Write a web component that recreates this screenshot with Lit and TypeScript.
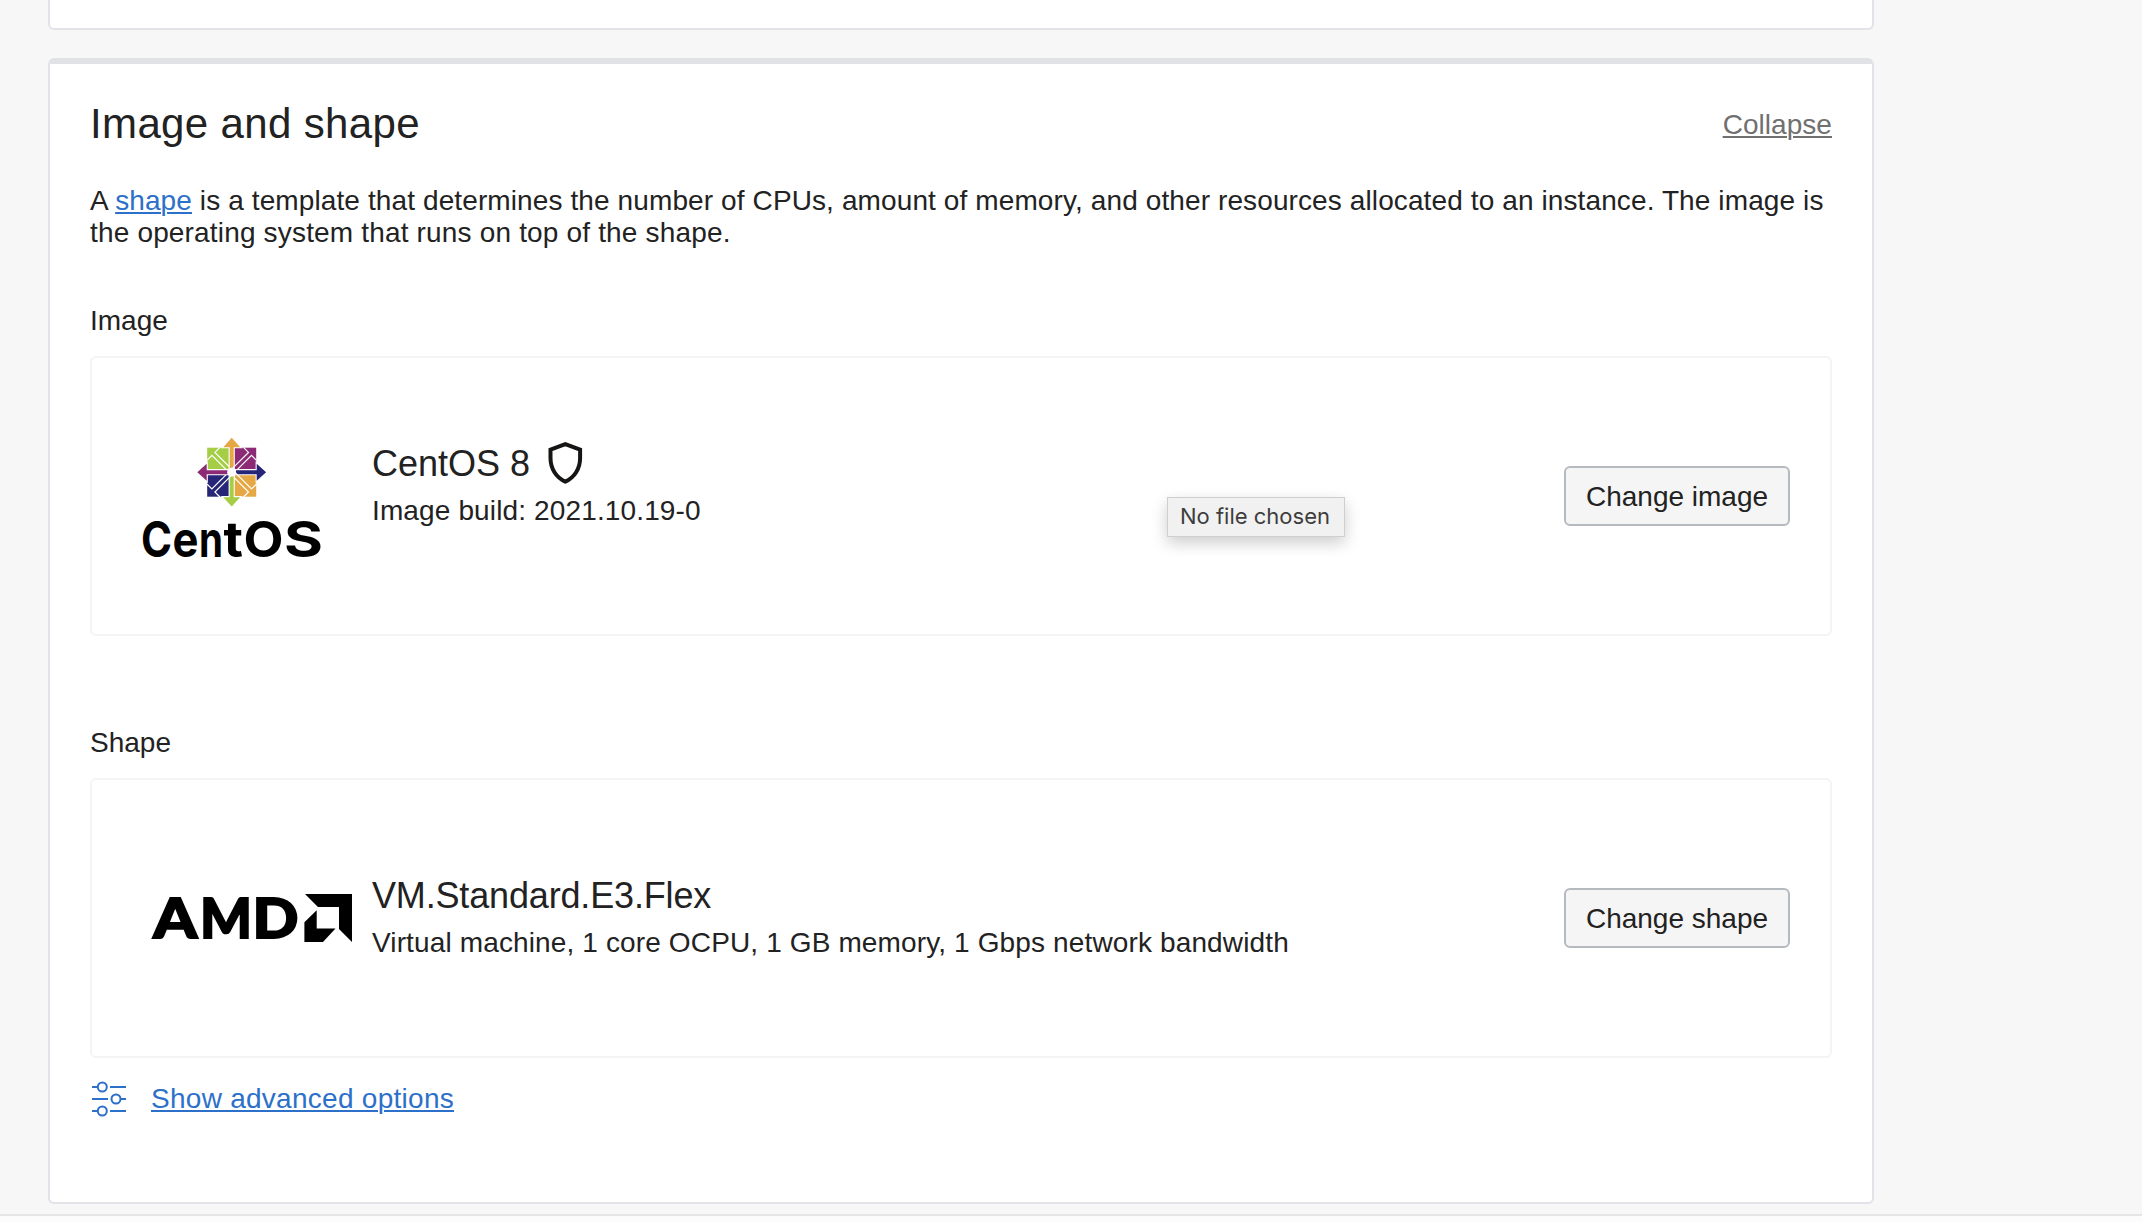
import { LitElement, html, css, svg } from "lit";
import { customElement } from "lit/decorators.js";

const spokes = [0, 90, 180, 270];

const centosLogo = html`<svg class="logo" width="196" height="164" viewBox="134 414 196 164">
  <g transform="translate(231.7 472.2)">
    <rect x="-24.5" y="-24.5" width="23" height="23" fill="#a5cd46"></rect>
    <rect x="1.5" y="-24.5" width="23" height="23" fill="#8c2a76"></rect>
    <rect x="-24.5" y="1.5" width="23" height="23" fill="#262577"></rect>
    <rect x="1.5" y="1.5" width="23" height="23" fill="#e5a844"></rect>
    ${["#e5a844", "#262577", "#a5cd46", "#8c2a76"].map(
      (c, i) => svg`<g transform="rotate(${spokes[i]})">
        <path d="M-24.8 -11.8L-19.8 -16.8L-4 -1M-11.8 -24.8L-16.8 -19.8L-1 -4" fill="none" stroke="#fff" stroke-width="1.2"></path>
        <path d="M-2 -4L-2 -25L-8.500 -25L0 -34.4L8.500 -25L2 -25L2 -4Z" fill="${c}" stroke="#fff" stroke-width="2.200" paint-order="stroke"></path>
      </g>`
    )}
    <circle r="4.400" fill="#fff"></circle>
  </g>
  <text class="centos" y="556.500"><tspan x="141" textLength="31" lengthAdjust="spacingAndGlyphs">C</tspan><tspan x="172.500" textLength="26" lengthAdjust="spacingAndGlyphs">e</tspan><tspan x="199" textLength="24" lengthAdjust="spacingAndGlyphs">n</tspan><tspan x="223.500" textLength="19.500" lengthAdjust="spacingAndGlyphs">t</tspan><tspan x="243.500" textLength="40" lengthAdjust="spacingAndGlyphs">O</tspan><tspan x="284" textLength="39" lengthAdjust="spacingAndGlyphs">S</tspan></text>
</svg>`;

const amdLogo = html`<svg class="logo" width="210" height="100" viewBox="147 868 210 100">
  <text class="amd" y="937.5"><tspan x="153.200" textLength="44" lengthAdjust="spacingAndGlyphs">A</tspan><tspan x="200" textLength="52" lengthAdjust="spacingAndGlyphs">M</tspan><tspan x="252.500" textLength="46" lengthAdjust="spacingAndGlyphs">D</tspan></text>
  <path d="M305 894H352V942L339 929V907H318Z"></path>
  <path d="M316.700 910.300V928.500H335.500L323 942H304.400V922.300Z"></path>
</svg>`;

const shield = html`<svg class="shield" width="36" height="44" viewBox="547 441 36 44">
  <path d="M565.3 444.200L580.100 449.700V458C580.100 468.500 574.500 477.500 565.300 481.600C556.100 477.500 550.500 468.500 550.500 458V449.700Z" fill="none" stroke="#161513" stroke-width="4"></path>
</svg>`;

const sliders = html`<svg class="sliders" width="36" height="36" viewBox="91 1081 36 36">
  <g fill="none" stroke="#2d70c9" stroke-width="2">
    <path d="M92 1087H97.500M110 1087H126M92 1099H108M121 1099H126M92 1111H97.500M110 1111H126"></path>
    <circle cx="102.300" cy="1087" r="4.500"></circle>
    <circle cx="116" cy="1099" r="4.500"></circle>
    <circle cx="102.300" cy="1111" r="4.500"></circle>
  </g>
</svg>`;

@customElement("app-root")
export class AppRoot extends LitElement {
  static styles = css`
    :host {
      display: block;
      position: relative;
      height: 1222px;
      overflow: hidden;
      background: #f7f7f7;
      color: #222;
      font: 28px/32px "Liberation Sans", Arial, sans-serif;
    }
    * { box-sizing: border-box; }
    .page { display: flex; flex-direction: column; height: 1222px; }
    .previous {
      width: 1826px; height: 30px; margin-left: 48px; flex: none;
      background: #fff; border: 2px solid #e2e3e9; border-top: 0;
      border-radius: 0 0 6px 6px;
    }
    .panel {
      width: 1826px; height: 1146px; margin: 28px 0 0 48px; flex: none;
      padding: 35px 40px 0; background: #fff;
      border: 2px solid #e2e3e9; border-top: 6px solid #e1e2e6; border-radius: 6px;
    }
    .footer { margin-top: 10px; flex: 1; border-top: 2px solid #e5e5e5; background: #fcfcfc; }
    .head { display: flex; justify-content: space-between; height: 50px; }
    h2 { margin: 0; font-size: 42px; line-height: 50px; font-weight: 400; letter-spacing: .36px; }
    a { text-decoration: underline; text-decoration-thickness: 2px; text-underline-offset: 2px; color: #2d70c9; }
    .collapse { color: #707070; padding-top: 10px; letter-spacing: .05px; }
    p { margin: 36px 0 0; white-space: nowrap; }
    .line1 { letter-spacing: .11px; }
    .line2 { letter-spacing: .17px; }
    .label { margin-top: 56px; height: 32px; }
    .label.second { margin-top: 91px; }
    .card {
      display: grid; grid-template-columns: 280px 1fr auto; align-items: center;
      height: 280px; margin-top: 19px; padding-right: 40px;
      border: 2px solid #f4f4f4; border-radius: 6px;
    }
    .logo { display: block; margin-left: 42px; }
    .card.shape .logo { margin-left: 55px; }
    .centos { font: 700 49px Inter, sans-serif; fill: #000; }
    .amd { font: 900 55px Lato, sans-serif; fill: #000; stroke: #000; stroke-width: 1.800px; }
    .info { align-self: start; padding-top: 84px; }
    .card.shape .info { padding-top: 94px; }
    .title { display: flex; height: 53px; font-size: 36px; line-height: 44px; }
    .card.shape .title { letter-spacing: -.16px; }
    .detail { letter-spacing: .135px; }
    .shield { margin-left: 17px; margin-top: -1px; }
    button {
      width: 226px; height: 60px; padding: 2px 0 0; font: inherit; color: inherit;
      background: #f5f5f5; border: 2px solid #b5bac1; border-radius: 6px; white-space: nowrap;
    }
    .advanced { display: flex; margin-top: 25px; }
    .sliders { margin-left: 1px; margin-top: -2px; }
    .advanced a { margin-left: 24px; letter-spacing: .27px; }
    .tooltip {
      position: absolute; left: 1167px; top: 497px; width: 178px; height: 40px;
      border: 1px solid #cfcfcf; background: #f1f1f1; color: #3d3d3d;
      font: 22px/37px Inter, sans-serif; padding-left: 12px; white-space: nowrap;
      box-shadow: 0 6px 16px rgba(0, 0, 0, .2);
    }
  `;

  render() {
    return html`
      <div class="page">
        <div class="previous"></div>
        <section class="panel">
          <div class="head"><h2>Image and shape</h2><a class="collapse">Collapse</a></div>
          <p><span class="line1">A <a>shape</a> is a template that determines the number of CPUs, amount of memory, and other resources allocated to an instance. The image is</span><br><span class="line2">the operating system that runs on top of the shape.</span></p>
          <div class="label">Image</div>
          <div class="card">
            ${centosLogo}
            <div class="info">
              <div class="title"><span>CentOS 8</span>${shield}</div>
              <div class="detail">Image build: 2021.10.19-0</div>
            </div>
            <button>Change image</button>
          </div>
          <div class="label second">Shape</div>
          <div class="card shape">
            ${amdLogo}
            <div class="info">
              <div class="title"><span>VM.Standard.E3.Flex</span></div>
              <div class="detail">Virtual machine, 1 core OCPU, 1 GB memory, 1 Gbps network bandwidth</div>
            </div>
            <button>Change shape</button>
          </div>
          <div class="advanced">${sliders}<a>Show advanced options</a></div>
        </section>
        <div class="footer"></div>
      </div>
      <div class="tooltip">No file chosen</div>
    `;
  }
}
